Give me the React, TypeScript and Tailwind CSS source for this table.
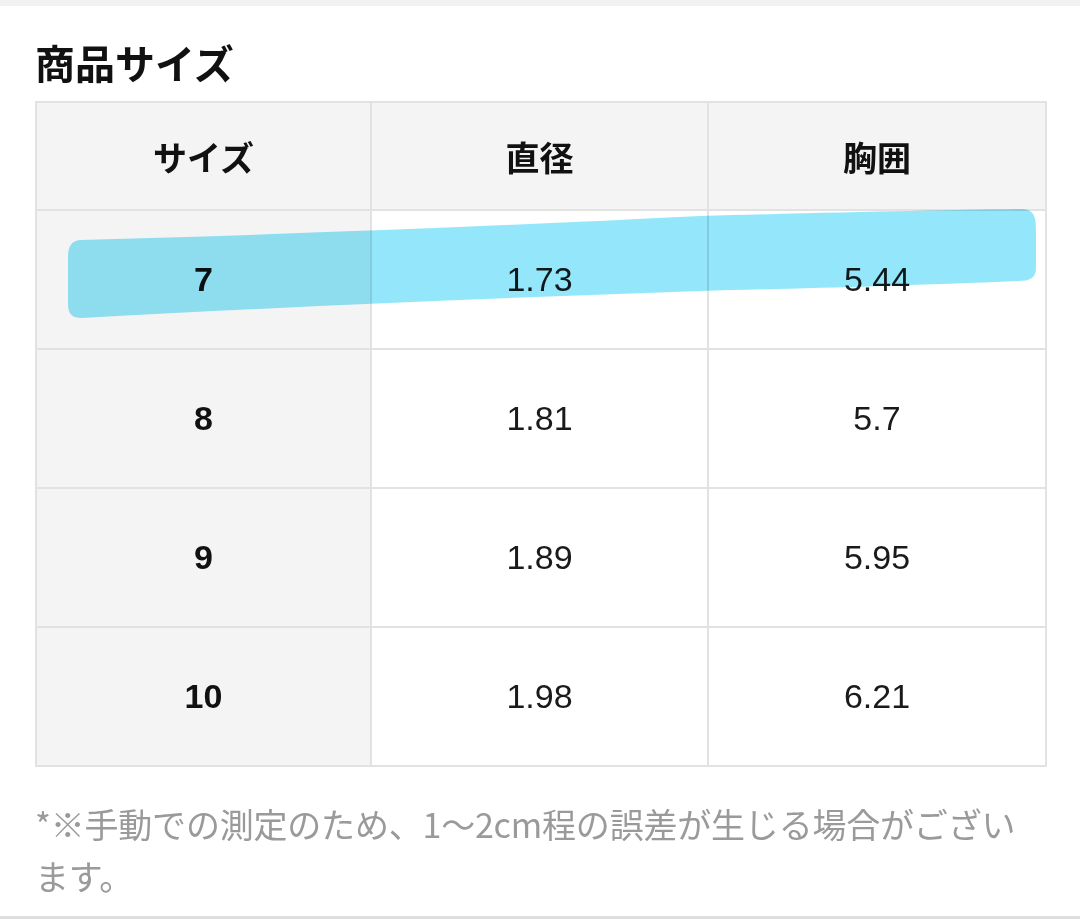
const rows = [
  { size: "7", diameter: "1.73", chest: "5.44" },
  { size: "8", diameter: "1.81", chest: "5.7" },
  { size: "9", diameter: "1.89", chest: "5.95" },
  { size: "10", diameter: "1.98", chest: "6.21" },
]

const jp = "font-['Noto_Sans_CJK_JP','Noto_Sans',sans-serif]"
const num = "font-['Liberation_Sans',Arial,sans-serif]"

export default function App() {
  return (
    <div className="w-[1080px] h-[919px] bg-white flex flex-col overflow-hidden">
      <div className="h-[6px] bg-[#f2f2f2]" />

      <div className="relative flex-1 px-[35px]">
        <h2 className={`${jp} mt-[32px] mb-[15px] text-[40px] leading-[1.2] font-bold text-[#111]`}>商品サイズ</h2>

        {/* size table */}
        <table className="w-[1010px] border-collapse table-fixed">
          <colgroup>
            <col className="w-[335px]" />
            <col className="w-[337px]" />
            <col className="w-[338px]" />
          </colgroup>
          <thead>
            <tr className="h-[108px] bg-[#f4f4f4]">
              {["サイズ", "直径", "胸囲"].map((h) => (
                <th
                  key={h}
                  className={`${jp} border-2 border-[#e2e2e2] text-[34px] font-bold text-[#111] text-center align-middle`}
                >
                  {h}
                </th>
              ))}
            </tr>
          </thead>
          <tbody>
            {rows.map((r) => (
              <tr key={r.size} className="h-[139px]">
                <td className={`${num} border-2 border-[#e2e2e2] bg-[#f4f4f4] text-[34px] font-bold text-[#111] text-center`}>
                  {r.size}
                </td>
                <td className={`${num} border-2 border-[#e2e2e2] text-[34px] text-[#1a1a1a] text-center`}>{r.diameter}</td>
                <td className={`${num} border-2 border-[#e2e2e2] text-[34px] text-[#1a1a1a] text-center`}>{r.chest}</td>
              </tr>
            ))}
          </tbody>
        </table>

        <p className={`${jp} mt-[31px] w-[1000px] text-[34px] leading-[52px] text-[#9a9a9a] tracking-[-0.2px]`}>
          *※手動での測定のため、1〜2cm程の誤差が生じる場合がござい
          <br />
          ます。
        </p>

        {/* highlighter stroke over the size 7 row */}
        <svg
          className="absolute left-0 top-0 pointer-events-none mix-blend-multiply"
          width="1080"
          height="340"
          viewBox="0 0 1080 340"
        >
          <path
            d="M80 240 C 300 234, 500 226, 700 216 C 850 212, 950 210, 1020 209 C 1034 209, 1036 216, 1036 230 L 1036 268 C 1036 278, 1030 281, 1018 281 C 900 286, 780 289, 700 291 C 500 298, 300 306, 82 318 C 72 318, 68 314, 68 304 L 68 256 C 68 246, 72 241, 80 240 Z"
            fill="#8ee6fa"
            opacity="0.95"
            transform="translate(0,-6)"
          />
        </svg>
      </div>

      <div className="h-[3px] bg-[#dedede]" />
    </div>
  )
}
